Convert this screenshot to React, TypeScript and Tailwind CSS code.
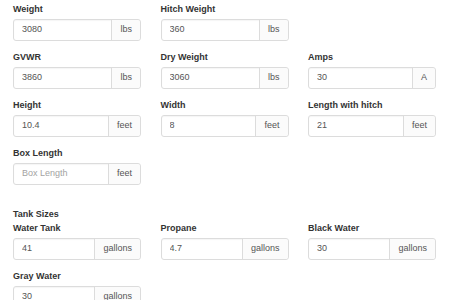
type Field = {
  label: string;
  value?: string;
  placeholder?: string;
  unit: string;
};

const specRows: (Field | null)[][] = [
  [
    { label: 'Weight', value: '3080', unit: 'lbs' },
    { label: 'Hitch Weight', value: '360', unit: 'lbs' },
    null,
  ],
  [
    { label: 'GVWR', value: '3860', unit: 'lbs' },
    { label: 'Dry Weight', value: '3060', unit: 'lbs' },
    { label: 'Amps', value: '30', unit: 'A' },
  ],
  [
    { label: 'Height', value: '10.4', unit: 'feet' },
    { label: 'Width', value: '8', unit: 'feet' },
    { label: 'Length with hitch', value: '21', unit: 'feet' },
  ],
  [{ label: 'Box Length', placeholder: 'Box Length', unit: 'feet' }, null, null],
];

const tankRows: (Field | null)[][] = [
  [
    { label: 'Water Tank', value: '41', unit: 'gallons' },
    { label: 'Propane', value: '4.7', unit: 'gallons' },
    { label: 'Black Water', value: '30', unit: 'gallons' },
  ],
  [{ label: 'Gray Water', value: '30', unit: 'gallons' }, null, null],
];

const FieldGroup = ({ field }: { field: Field | null }) => {
  if (!field) return <div />;
  return (
    <div className="flex flex-col">
      <label className="h-[14px] leading-[14px] text-[9px] font-bold text-[#333]">{field.label}</label>
      <div className="mt-[3px] flex h-[22px] rounded-[3px] border border-[#dcdcdc] shadow-[inset_0_1px_1px_rgba(0,0,0,0.04)]">
        <input
          readOnly
          defaultValue={field.value}
          placeholder={field.placeholder}
          className="min-w-0 flex-1 bg-transparent pl-[8px] text-[9px] text-[#555] outline-none placeholder:text-[#a3a3a3]"
        />
        <span className="flex items-center border-l border-[#dcdcdc] bg-[#fbfbfb] px-[8px] text-[9px] text-[#555] rounded-r-[3px]">
          {field.unit}
        </span>
      </div>
    </div>
  );
};

const Rows = ({ rows }: { rows: (Field | null)[][] }) => (
  <div className="flex flex-col gap-[9px]">
    {rows.map((row, i) => (
      <div key={i} className="grid grid-cols-[128px_128px_128px] gap-x-[19.5px]">
        {row.map((f, j) => (
          <FieldGroup key={j} field={f} />
        ))}
      </div>
    ))}
  </div>
);

export default function App() {
  return (
    <div
      className="h-[300px] w-[450px] overflow-hidden bg-white pl-[13px] pt-[2px]"
      style={{ fontFamily: '"Liberation Sans", Arial, sans-serif' }}
    >
      <Rows rows={specRows} />
      <div className="mt-[22px] h-[14px] leading-[14px] text-[9px] font-bold text-[#333]">Tank Sizes</div>
      <Rows rows={tankRows} />
    </div>
  );
}
